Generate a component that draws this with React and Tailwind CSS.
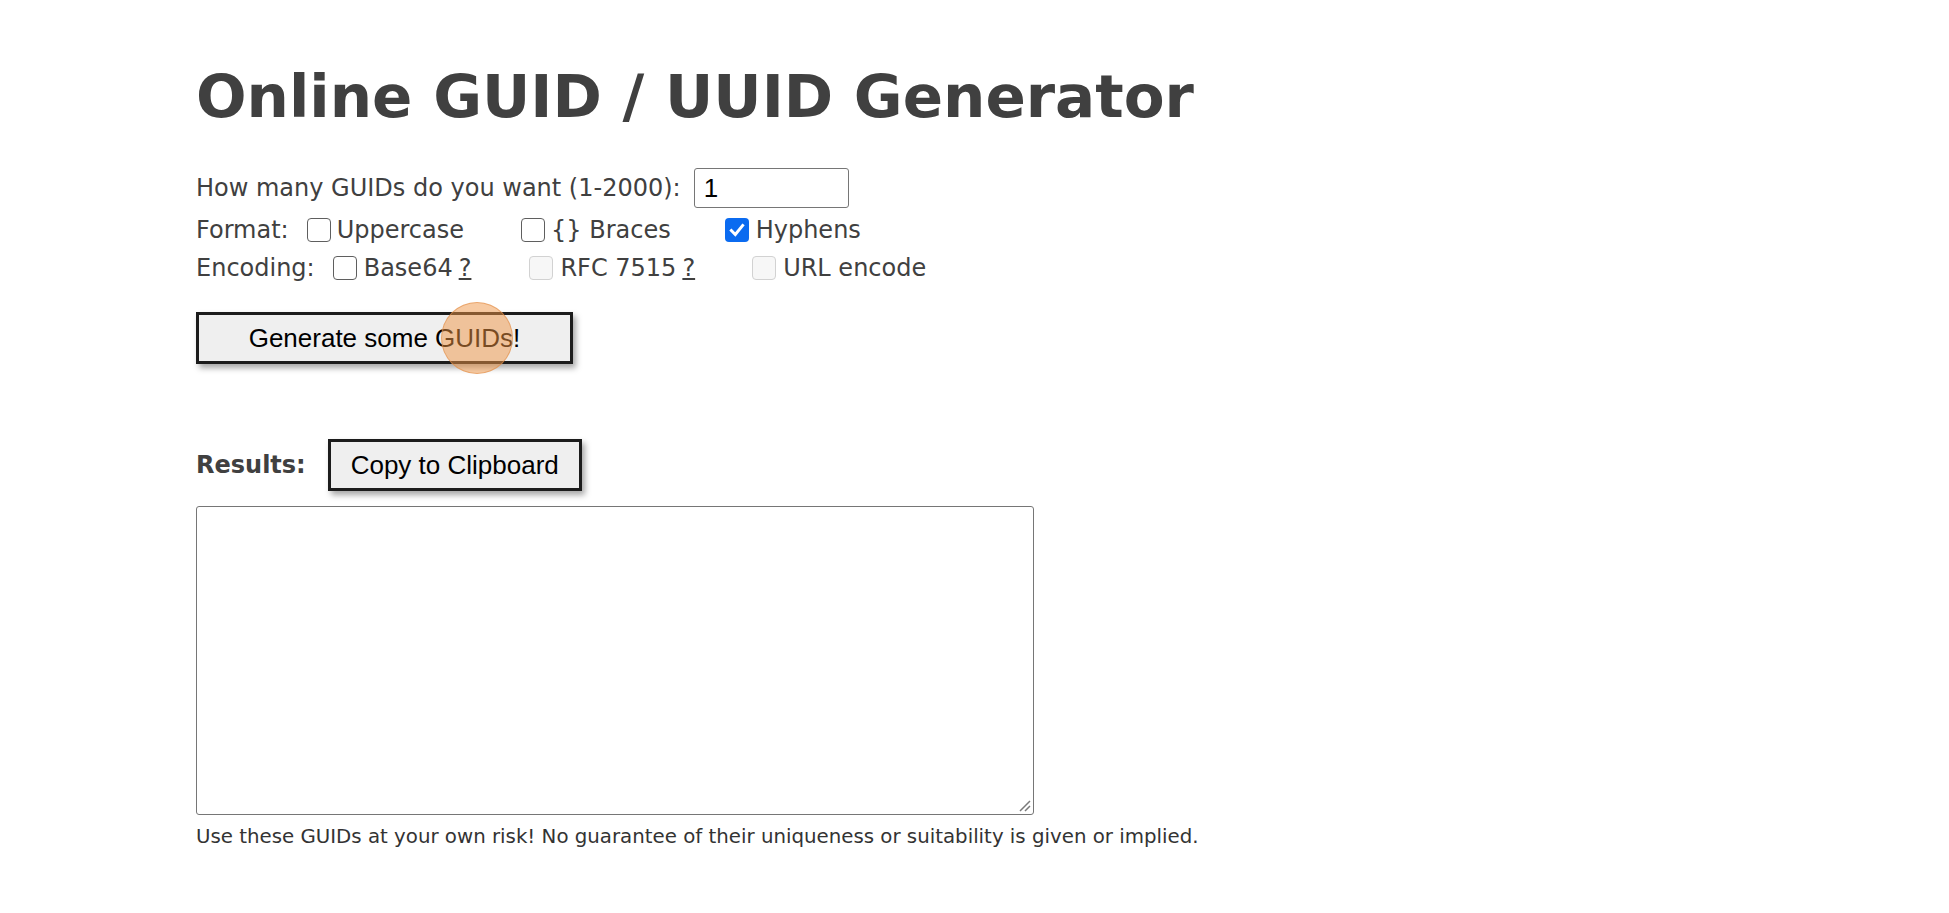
import React from "react";

function Box({ state = "off", className = "" }) {
  if (state === "on") {
    return (
      <span className={`inline-flex items-center justify-center w-[24px] h-[24px] rounded-[4px] bg-[#0b6bf0] shrink-0 ${className}`}>
        <svg width="18" height="18" viewBox="0 0 16 16" fill="none">
          <path d="M3 8.5 L6.5 12 L13 4" stroke="white" strokeWidth="2.6" strokeLinecap="square" strokeLinejoin="miter" />
        </svg>
      </span>
    );
  }
  if (state === "disabled") {
    return <span className={`inline-block w-[24px] h-[24px] rounded-[4px] border border-[#d2d2d2] bg-[#f7f7f7] shrink-0 ${className}`} />;
  }
  return <span className={`inline-block w-[24px] h-[24px] rounded-[4px] border-[1.5px] border-[#5f5f5f] bg-white shrink-0 ${className}`} />;
}

export default function App() {
  const font = { fontFamily: '"DejaVu Sans", Verdana, sans-serif' };
  const arial = { fontFamily: '"Liberation Sans", Arial, sans-serif' };
  return (
    <div className="min-h-[913px] w-full bg-white text-[#404040]" style={font}>
      <div className="pl-[196px] pt-[67px]">
        <h1 className="text-[59.5px] leading-[60px] font-bold text-[#404040] m-0">Online GUID / UUID Generator</h1>

        <div className="mt-[41px] flex items-center h-[40px] text-[24px]">
          <span>How many GUIDs do you want (1-2000):</span>
          <div className="ml-[13px] w-[155px] h-[40px] border border-[#767676] rounded-[3px] flex items-center pl-[9px] text-black text-[26px]" style={arial}>1</div>
        </div>

        <div className="mt-[2px] flex items-center h-[40px] text-[24px]">
          <span>Format:</span>
          <Box className="ml-[18px]" />
          <span className="ml-[6px]">Uppercase</span>
          <Box className="ml-[57px]" />
          <span className="ml-[6px]">{"{}"} Braces</span>
          <Box state="on" className="ml-[54px]" />
          <span className="ml-[7px]">Hyphens</span>
        </div>

        <div className="flex items-center h-[36px] text-[24px]">
          <span>Encoding:</span>
          <Box className="ml-[18px]" />
          <span className="ml-[7px]">Base64</span>
          <span className="ml-[6px] underline">?</span>
          <Box state="disabled" className="ml-[58px]" />
          <span className="ml-[7px]">RFC 7515</span>
          <span className="ml-[6px] underline">?</span>
          <Box state="disabled" className="ml-[57px]" />
          <span className="ml-[7px]">URL encode</span>
        </div>

        <div className="mt-[26px] relative w-[377px]">
          <button className="w-[377px] h-[52px] bg-[#efefef] border-[3px] border-[#1c1c1c] shadow-[3px_4px_6px_rgba(0,0,0,0.35)] text-black text-[26px] flex items-center justify-center" style={arial}>
            Generate some GUIDs!
          </button>
          <span className="absolute left-[245px] top-[-10px] w-[72px] h-[72px] rounded-full bg-[rgba(240,150,70,0.5)] border border-[rgba(225,140,70,0.6)] pointer-events-none" />
        </div>

        <div className="mt-[75px] flex items-center h-[52px]">
          <span className="text-[24px] font-bold">Results:</span>
          <button className="ml-[22px] w-[254px] h-[52px] bg-[#efefef] border-[3px] border-[#1c1c1c] shadow-[3px_4px_6px_rgba(0,0,0,0.35)] text-black text-[26px] flex items-center justify-center" style={arial}>
            Copy to Clipboard
          </button>
        </div>

        <div className="mt-[15px] relative w-[838px] h-[309px] border border-[#767676] rounded-[3px] bg-white">
          <svg className="absolute right-[2px] bottom-[2px]" width="14" height="14" viewBox="0 0 14 14">
            <path d="M13 3 L3 13 M13 8 L8 13" stroke="#7a7a7a" strokeWidth="1.5" />
          </svg>
        </div>

        <p className="mt-[10px] text-[19.8px] leading-[24px] text-[#333]">Use these GUIDs at your own risk! No guarantee of their uniqueness or suitability is given or implied.</p>
      </div>
    </div>
  );
}
